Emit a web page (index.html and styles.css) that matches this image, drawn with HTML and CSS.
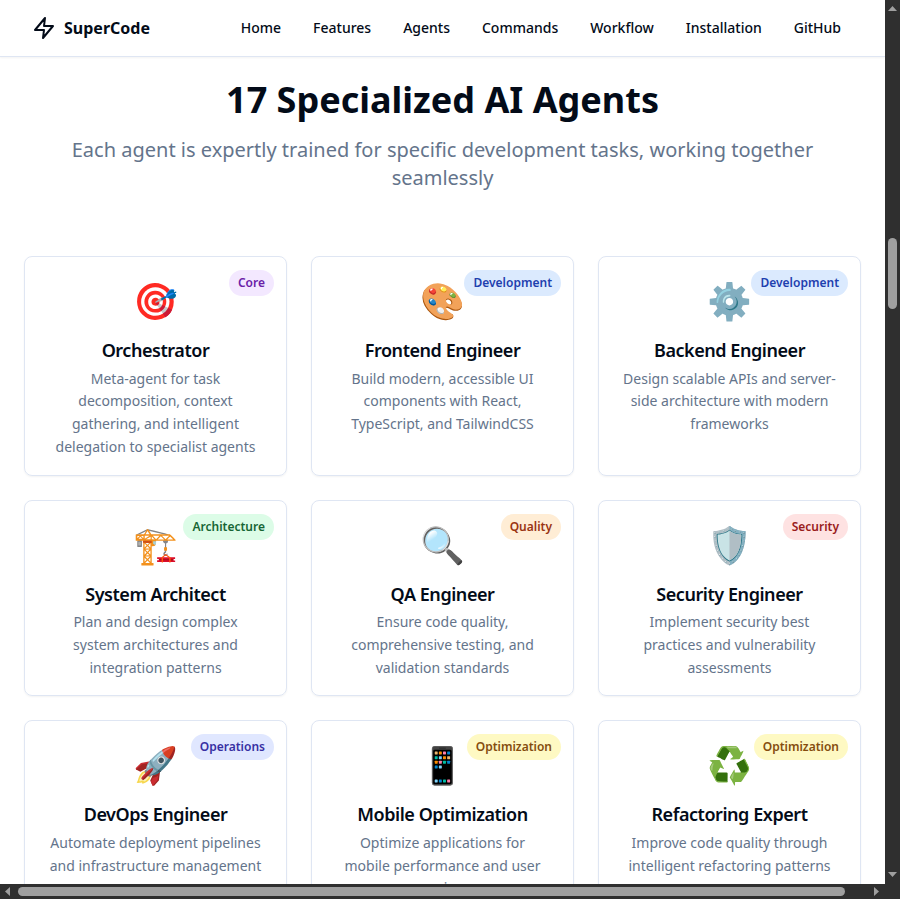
FILE: index.html
```html
<!DOCTYPE html>
<html lang="en">
<head>
<meta charset="utf-8">
<meta name="viewport" content="width=device-width, initial-scale=1">
<title>SuperCode</title>
<link rel="stylesheet" href="styles.css">
</head>
<body>
<div class="viewport">
  <div class="page">
    <header class="topbar">
      <a class="brand" href="#">
        <svg class="brand-icon" viewBox="0 0 24 24" fill="none" stroke="currentColor" stroke-width="2" stroke-linecap="round" stroke-linejoin="round" aria-hidden="true"><path d="M13 2 3 14h9l-1 8 10-12h-9l1-8z"/></svg>
        <span>SuperCode</span>
      </a>
      <nav class="nav">
        <a href="#home">Home</a>
        <a href="#features">Features</a>
        <a href="#agents">Agents</a>
        <a href="#commands">Commands</a>
        <a href="#workflow">Workflow</a>
        <a href="#installation">Installation</a>
        <a href="#github">GitHub</a>
      </nav>
    </header>
    <main class="agents" id="agents">
      <div class="intro">
        <h1>17 Specialized AI Agents</h1>
        <p>Each agent is expertly trained for specific development tasks, working together seamlessly</p>
      </div>
      <div class="grid">
        <article class="card">
          <span class="badge core">Core</span>
          <div class="emoji">🎯</div>
          <h2>Orchestrator</h2>
          <p>Meta-agent for task decomposition, context gathering, and intelligent delegation to specialist agents</p>
        </article>
        <article class="card">
          <span class="badge development">Development</span>
          <div class="emoji">🎨</div>
          <h2>Frontend Engineer</h2>
          <p>Build modern, accessible UI components with React, TypeScript, and TailwindCSS</p>
        </article>
        <article class="card">
          <span class="badge development">Development</span>
          <div class="emoji">⚙️</div>
          <h2>Backend Engineer</h2>
          <p>Design scalable APIs and server-side architecture with modern frameworks</p>
        </article>
        <article class="card">
          <span class="badge architecture">Architecture</span>
          <div class="emoji">🏗️</div>
          <h2>System Architect</h2>
          <p>Plan and design complex system architectures and integration patterns</p>
        </article>
        <article class="card">
          <span class="badge quality">Quality</span>
          <div class="emoji">🔍</div>
          <h2>QA Engineer</h2>
          <p>Ensure code quality, comprehensive testing, and validation standards</p>
        </article>
        <article class="card">
          <span class="badge security">Security</span>
          <div class="emoji">🛡️</div>
          <h2>Security Engineer</h2>
          <p>Implement security best practices and vulnerability assessments</p>
        </article>
        <article class="card">
          <span class="badge operations">Operations</span>
          <div class="emoji">🚀</div>
          <h2>DevOps Engineer</h2>
          <p>Automate deployment pipelines and infrastructure management</p>
        </article>
        <article class="card">
          <span class="badge optimization">Optimization</span>
          <div class="emoji">📱</div>
          <h2>Mobile Optimization</h2>
          <p>Optimize applications for mobile performance and user experience</p>
        </article>
        <article class="card">
          <span class="badge optimization">Optimization</span>
          <div class="emoji">♻️</div>
          <h2>Refactoring Expert</h2>
          <p>Improve code quality through intelligent refactoring patterns</p>
        </article>
      </div>
    </main>
  </div>
  <div class="bar vertical" aria-hidden="true">
    <svg class="arrow" viewBox="0 0 15 15"><path d="M3 11h9L7.500 6z"/></svg>
    <div class="track"><div class="thumb"></div></div>
    <svg class="arrow" viewBox="0 0 15 15"><path d="M3 3h9l-4.500 5z"/></svg>
  </div>
  <div class="bar horizontal" aria-hidden="true">
    <svg class="arrow" viewBox="0 0 15 15"><path d="M10 3v9L5 7.500z"/></svg>
    <div class="track"><div class="thumb"></div></div>
    <svg class="arrow" viewBox="0 0 15 15"><path d="M4 3v9l5-4.500z"/></svg>
  </div>
  <div class="corner"></div>
</div>
</body>
</html>
```
FILE: styles.css
```css
* { box-sizing: border-box; }

body, h1, h2, p { margin: 0; }

body {
  font-family: "Noto Sans", sans-serif;
  color: #030b18;
  background: #fff;
}

a { color: inherit; text-decoration: none; }

.viewport {
  display: grid;
  grid-template-columns: minmax(0, 1fr) 15px;
  grid-template-rows: minmax(0, 1fr) 15px;
  height: 100vh;
}

.page { overflow: hidden; }

.topbar {
  display: flex;
  align-items: center;
  justify-content: space-between;
  height: 57px;
  padding: 0 44px 0 32px;
  border-bottom: 1px solid #dfe6f3;
  box-shadow: 0 1px 2px rgba(0, 0, 0, 0.05);
}

.brand {
  display: flex;
  align-items: center;
  gap: 8px;
  font-size: 16px;
  font-weight: 700;
  line-height: 24px;
}

.brand-icon { width: 24px; height: 24px; }

.nav {
  display: flex;
  gap: 32px;
  font-size: 14px;
  font-weight: 500;
  line-height: 20px;
}

.agents { padding: 23px 24px; }

.intro {
  max-width: 768px;
  margin: 0 auto 64px;
  text-align: center;
}

.intro h1 {
  margin-bottom: 16px;
  font-size: 36px;
  font-weight: 700;
  line-height: 40px;
}

.intro p {
  color: #64748b;
  font-size: 20px;
  line-height: 28px;
}

.grid {
  display: grid;
  grid-template-columns: repeat(3, minmax(0, 1fr));
  gap: 24px;
}

.card {
  position: relative;
  padding: 24px 24px 16px;
  border: 1px solid #dfe6f3;
  border-radius: 8px;
  box-shadow: 0 1px 2px rgba(0, 0, 0, 0.05);
  text-align: center;
}

.emoji {
  margin-bottom: 18px;
  font-size: 36px;
  line-height: 40px;
}

.card h2 {
  margin-bottom: 6px;
  font-size: 18px;
  font-weight: 600;
  line-height: 1.25;
  letter-spacing: -0.025em;
}

.card p {
  color: #64748b;
  font-size: 14px;
  line-height: 1.625;
}

.badge {
  position: absolute;
  top: 13px;
  right: 12px;
  padding: 5px 9px;
  border-radius: 13px;
  font-size: 12px;
  font-weight: 600;
  line-height: 16px;
}

.core { background: #f3e8ff; color: #6b21a8; }
.development { background: #dbeafe; color: #1e40af; }
.architecture { background: #dcfce7; color: #166534; }
.quality { background: #ffedd5; color: #9a3412; }
.security { background: #fee2e2; color: #991b1b; }
.operations { background: #e0e7ff; color: #3730a3; }
.optimization { background: #fef9c3; color: #854d0e; }

.bar { display: flex; background: #2f2f2f; }
.vertical { flex-direction: column; }
.arrow { flex: none; width: 15px; height: 15px; fill: #9f9f9f; }
.track { display: flex; flex: 1; }
.thumb { border-radius: 5px; background: #9f9f9f; }
.vertical .track { flex-direction: column; padding: 0 3px; }
.vertical .thumb { height: 71px; margin-top: 223px; }
.horizontal .track { padding: 3px; }
.horizontal .thumb { flex: 1; margin-right: 22px; }
.corner { background: #2f2f2f; }
```
